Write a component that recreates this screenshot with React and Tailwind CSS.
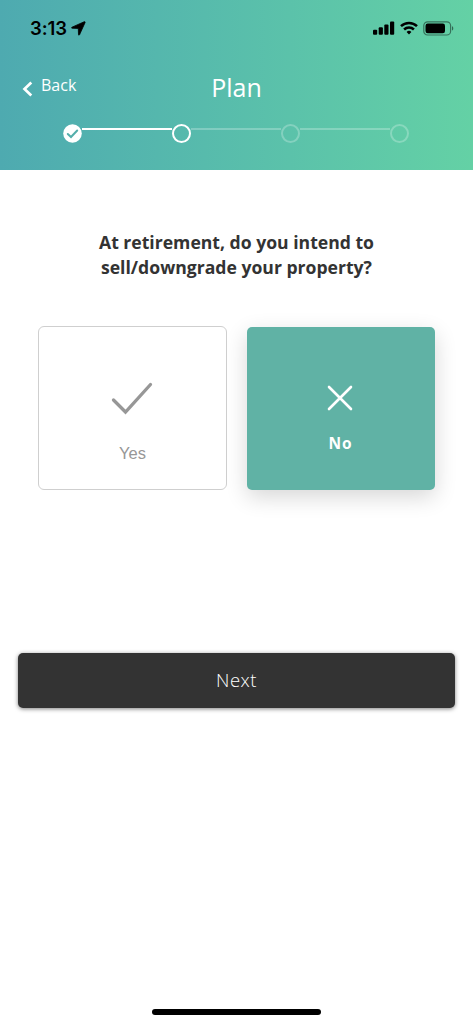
import { useState } from "react";
import clsx from "clsx";

const STEPS = ["done", "current", "upcoming", "upcoming"];

function StatusBar() {
  return (
    <div className="flex h-[56px] items-center justify-between pl-[30px] pr-[18px] text-black">
      <div className="flex items-center gap-[4px]">
        <span className="font-['Inter'] text-[18.5px] leading-none font-semibold tracking-[-0.1px]">
          3:13
        </span>
        <svg width="15" height="15" viewBox="0 0 15 15" fill="currentColor">
          <path
            d="M13.300.7 1 6.200c-.6.3-.5 1 .2 1l6.100.2.2 6.200c0 .7.700.8 1 .2L14.100 1.500c.2-.6-.2-1-.8-.8z"
            stroke="currentColor"
            strokeWidth="0.800"
            strokeLinejoin="round"
          />
        </svg>
      </div>

      <div className="flex items-center">
        <svg width="22" height="14" viewBox="0 0 22 14" fill="currentColor">
          <rect x="0" y="8.700" width="4.200" height="5.100" rx="1" />
          <rect x="5.700" y="6.300" width="4.200" height="7.500" rx="1" />
          <rect x="11.300" y="3.500" width="4.200" height="10.300" rx="1" />
          <rect x="17" y="0.500" width="4.200" height="13.300" rx="1" />
        </svg>
        <svg
          className="ml-[5px]"
          width="18"
          height="14"
          viewBox="0 0 18 14"
          fill="none"
          stroke="currentColor"
          strokeWidth="2.500"
        >
          <path d="M1 5.200a11.400 11.400 0 0 1 16 0" />
          <path d="M4.100 8.500a7 7 0 0 1 9.800 0" />
          <path d="M6.600 11 9 13.600 11.400 11a3.500 3.500 0 0 0-4.800 0z" fill="currentColor" stroke="none" />
        </svg>
        <svg className="ml-[5px]" width="32" height="15" viewBox="0 0 32 15">
          <rect
            x="0.800"
            y="0.800"
            width="26.800"
            height="13.200"
            rx="3.800"
            fill="none"
            stroke="#000"
            strokeOpacity="0.45"
            strokeWidth="1.200"
          />
          <rect x="2.500" y="2.500" width="19.500" height="9.800" rx="2.200" fill="#000" />
          <path d="M29 5.200c1.700.5 1.700 3.900 0 4.400z" fill="#000" fillOpacity="0.5" />
        </svg>
      </div>
    </div>
  );
}

function StepDot({ state }) {
  if (state === "done") {
    return (
      <svg className="shrink-0" width="19" height="19" viewBox="0 0 19 19">
        <circle cx="9.500" cy="9.500" r="9.300" fill="#fff" />
        <path
          d="M4.800 10 8 13 14.200 6.500"
          fill="none"
          stroke="#54aeab"
          strokeWidth="2"
          strokeLinecap="round"
        />
      </svg>
    );
  }
  return (
    <span
      className={clsx(
        "size-[19px] shrink-0 rounded-full border-2",
        state === "current" ? "border-white" : "border-white/25"
      )}
    />
  );
}

function Stepper() {
  return (
    <div className="mt-[16.5px] flex pr-[64px] pl-[63px]">
      {STEPS.map((state, i) => (
        <div key={i} className={clsx("flex", i > 0 && "flex-1")}>
          {i > 0 && (
            <span
              className={clsx(
                "mt-[4px] h-[2px] flex-1",
                state === "current" ? "bg-white" : "bg-white/25"
              )}
            />
          )}
          <StepDot state={state} />
        </div>
      ))}
    </div>
  );
}

function Header() {
  return (
    <header className="h-[170px] bg-linear-to-r from-[#4eaab0] to-[#64d1a5] text-white">
      <StatusBar />
      <div className="grid h-[51px] grid-cols-3 pt-[14px] font-['Open_Sans']">
        <button className="flex items-start pl-[22px] text-base leading-[30px]">
          <svg
            className="mt-[11px] mr-[8px]"
            width="11"
            height="16"
            viewBox="0 0 11 16"
            fill="none"
            stroke="currentColor"
            strokeWidth="2.700"
          >
            <path d="M9.300 1.500 2.500 8l6.800 6.500" />
          </svg>
          Back
        </button>
        <h1 className="text-center text-[25px] leading-[34px]">Plan</h1>
      </div>
      <Stepper />
    </header>
  );
}

function YesCard({ selected, onClick }) {
  return (
    <button
      aria-pressed={selected}
      onClick={onClick}
      className="flex h-[164px] w-[189px] flex-col items-center rounded-[6px] border border-[#cfcfcf] bg-white pt-[54px] text-[#979797]"
    >
      <svg
        className="-ml-[2px]"
        width="42"
        height="34"
        viewBox="0 0 42 34"
        fill="none"
        stroke="currentColor"
        strokeWidth="3.300"
        strokeLinecap="round"
      >
        <path d="M2.500 19 14.500 31 39.500 3.500" />
      </svg>
      <span className="mt-[26px] font-['Liberation_Sans'] text-[16.500px] leading-6">Yes</span>
    </button>
  );
}

function NoCard({ selected, onClick }) {
  return (
    <button
      aria-pressed={selected}
      onClick={onClick}
      className="mt-[0.5px] flex h-[163px] w-[188px] flex-col items-center rounded-[5px] bg-[#60b2a5] pt-[58px] text-white shadow-[0_7px_22px_rgba(0,0,0,0.16)]"
    >
      <svg
        className="-ml-[2px]"
        width="26"
        height="26"
        viewBox="0 0 26 26"
        fill="none"
        stroke="currentColor"
        strokeWidth="2.600"
        strokeLinecap="round"
      >
        <path d="M2 2 24 24M24 2 2 24" />
      </svg>
      <span className="mt-[20.5px] text-[15.500px] leading-6 font-bold tracking-[0.8px]">No</span>
    </button>
  );
}

export default function App() {
  const [answer, setAnswer] = useState("no");

  return (
    <div className="flex h-[1024px] w-[473px] flex-col bg-white font-['Open_Sans',sans-serif]">
      <Header />

      <main className="flex flex-1 flex-col">
        <h2 className="mt-[60px] text-center text-[17.600px] leading-[25px] font-bold text-[#333]">
          At retirement, do you intend to
          <br />
          sell/downgrade your property?
        </h2>

        <div className="mt-[46px] flex gap-[19.5px] pl-[38px]">
          <YesCard selected={answer === "yes"} onClick={() => setAnswer("yes")} />
          <NoCard selected={answer === "no"} onClick={() => setAnswer("no")} />
        </div>

        <button className="mx-[18px] mt-[163px] h-[55px] rounded-[5px] bg-[#333] pb-[2px] text-[18.500px] font-light tracking-[0.5px] text-white shadow-[0_1px_4px_rgba(0,0,0,0.5)]">
          Next
        </button>
      </main>

      <div className="mx-auto mb-[9px] h-[6px] w-[169px] rounded-full bg-black" />
    </div>
  );
}
